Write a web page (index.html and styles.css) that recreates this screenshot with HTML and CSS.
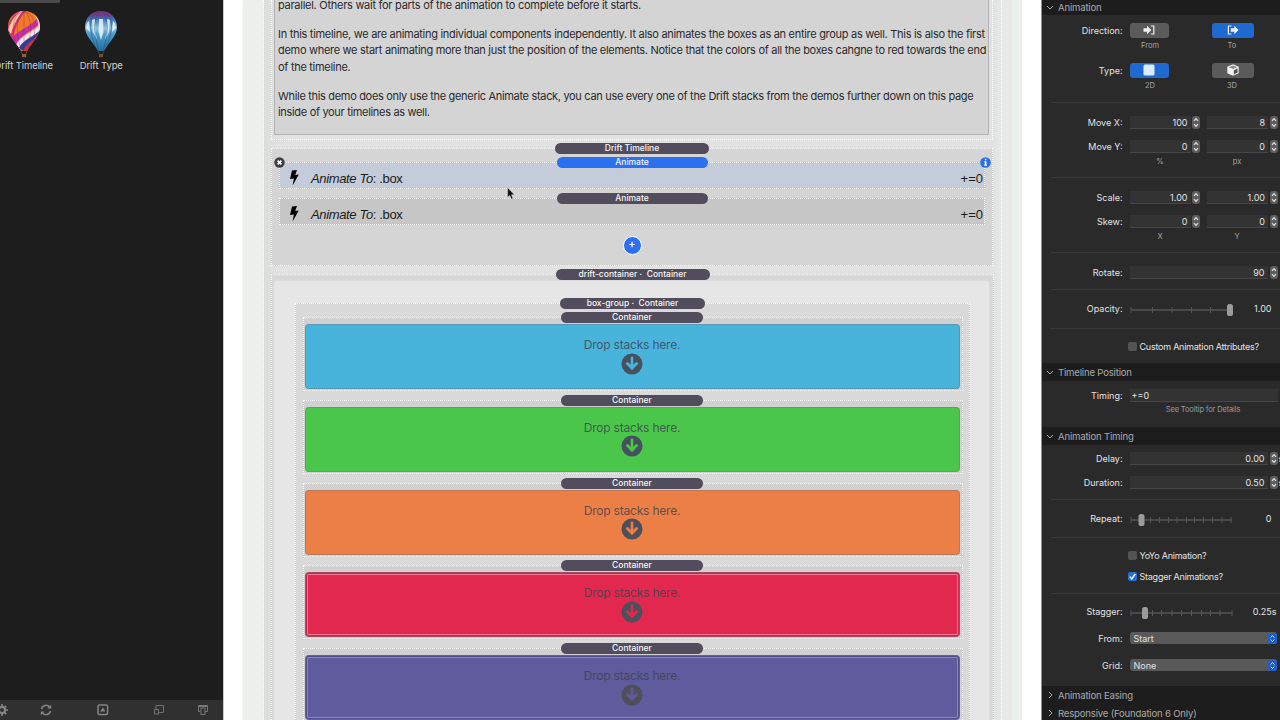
FILE: index.html
```html
<!DOCTYPE html>
<html lang="en">
<head>
  <meta charset="UTF-8" />
  <meta name="viewport" content="width=device-width, initial-scale=1.0"/>
  <title>Drift Timeline</title>
  <link rel="stylesheet" href="styles.css">
</head>
<body>
  <!-- shared icons -->
  <svg class="defs" width="0" height="0">
    <symbol id="bolt" viewBox="0 0 10 16"><path d="M3 .5 8 0 6.2 5 9.8 4.6 3.6 15.6 4.9 8.4 1 9z"/></symbol>
    <symbol id="drop" viewBox="0 0 22 22">
      <path fill-rule="evenodd" d="M11 .5a10.5 10.5 0 1 0 0 21 10.5 10.5 0 0 0 0-21zM9.7 3.7h2.600v8.100l3.200-3.100 1.900 1.800L11 17.300l-6.400-6.800 1.900-1.800 3.200 3.100z"/>
    </symbol>
    <symbol id="step" viewBox="0 0 8 13">
      <rect width="8" height="13" rx="3" fill="#5d5d5d"/>
      <path d="M2 4.8 4 2.7l2 2.100M2 8.200l2 2.100 2-2.100" fill="none" stroke="#e4e4e4" stroke-width="1.200"/>
    </symbol>
    <symbol id="pick" viewBox="0 0 9 11">
      <rect width="9" height="11" rx="2.500" fill="#1d5fc9"/>
      <path d="M2.700 4.500 4.500 2.600l1.800 1.900M2.700 6.600l1.800 1.900 1.800-1.900" fill="none" stroke="#d5e4fa" stroke-width="1"/>
    </symbol>
  </svg>

  <div class="app">
    <aside class="library">
      <div class="tab"></div>
      <div class="stacks">
        <div class="item">
          <svg width="34" height="48" viewBox="0 0 34 48">
            <defs>
              <clipPath id="b1"><path d="M17 1C7 1 1 8 1 17c0 9 8 15 13 24h6c5-9 13-15 13-24C33 8 27 1 17 1z"/></clipPath>
            </defs>
            <g clip-path="url(#b1)">
              <rect width="34" height="48" fill="#ef7a28"/>
              <path d="M-2 22C5 5 9 2 14 0h6C12 8 8 17 5 32z" fill="#d92f72"/>
              <path d="M1 20C5 8 10 4 14 1h2C10 8 7 14 4 24z" fill="#f6cf9e"/>
              <path d="M4 30C9 20 23 19 34 4v9C25 21 13 24 10 36z" fill="#c62fa5"/>
              <path d="M9 35C12 26 27 22 34 13v6C28 27 16 27 13 40z" fill="#f1e6f2"/>
              <path d="M12 38C16 29 28 27 34 19v8L18 42z" fill="#27429d"/>
              <path d="M16 41C19 34 26 30 31 25v6L20 43z" fill="#cf3345"/>
              <path d="M24 1c8 2 12 8 12 14l-5 3c1-7-2-12-7-17z" fill="#f7d8c4"/>
              <path d="M17 1C10 6 8 17 14 41M17 1c7 5 9 17 3 40M17 1v40M17 1C7 4 4 14 8 32M17 1c10 3 13 13 9 31" fill="none" stroke="#8e2360" stroke-opacity=".45" stroke-width=".8"/>
            </g>
            <path d="m14 41 1.400 3.500M20 41l-1.400 3.500" stroke="#6b5a44" stroke-width=".7"/>
            <rect x="15" y="44" width="4.200" height="3.200" fill="#8a6537"/>
          </svg>
          <span>Drift Timeline</span>
        </div>
        <div class="item">
          <svg width="34" height="48" viewBox="0 0 34 48">
            <defs>
              <clipPath id="b2"><path d="M17 1C7 1 1 8 1 17c0 9 8 15 13 24h6c5-9 13-15 13-24C33 8 27 1 17 1z"/></clipPath>
              <linearGradient id="sky" x2="0" y2="1">
                <stop offset="0" stop-color="#a92667"/><stop offset=".13" stop-color="#66438f"/>
                <stop offset=".22" stop-color="#3c79b4"/><stop offset=".42" stop-color="#8fc2dd"/>
                <stop offset=".56" stop-color="#4b9bc8"/><stop offset="1" stop-color="#24699c"/>
              </linearGradient>
            </defs>
            <g clip-path="url(#b2)">
              <rect width="34" height="43" fill="url(#sky)"/>
              <path d="M15 9h4l.5 13-2.500 8-2.500-8zM8 10l3-1 .5 13 1.500 8-4-8zM26 10l-3-1-.5 13-1.500 8 4-8zM3 13l2-2 1 11-4-4zM31 13l-2-2-1 11 4-4z" fill="#e9f5fa" fill-opacity=".85"/>
              <path d="M17 1C10 6 8 17 15 41M17 1c7 5 9 17 2 40M17 1C6 4 2 14 13 41M17 1c11 3 15 13 4 40" fill="none" stroke="#174c7d" stroke-opacity=".6" stroke-width=".8"/>
            </g>
            <path d="m14 41 1.400 3.500M20 41l-1.400 3.500" stroke="#46596a" stroke-width=".7"/>
            <rect x="15" y="44" width="4" height="3.200" fill="#6c5138"/>
          </svg>
          <span>Drift Type</span>
        </div>
      </div>
      <div class="toolbar">
        <svg width="12" height="12" viewBox="0 0 12 12"><circle cx="6" cy="6" r="3.200" fill="none" stroke="#858585" stroke-width="2"/><path d="M6 0v12M0 6h12M1.800 1.800l8.400 8.400M10.200 1.800l-8.400 8.400" stroke="#858585" stroke-width="1.700"/><circle cx="6" cy="6" r="2" fill="#303030"/></svg>
        <svg width="12" height="12" viewBox="0 0 12 12" fill="none" stroke="#858585" stroke-width="1.500"><path d="M1.500 5A4.600 4.600 0 0 1 9.800 3.400M10.500 7A4.600 4.600 0 0 1 2.200 8.600"/><path d="M11.200.8v3.800H7.400zM.8 11.200V7.400h3.800z" fill="#858585" stroke="none"/></svg>
        <svg width="12" height="12" viewBox="0 0 12 12"><rect x="1" y="1" width="9.600" height="9.600" rx="1.500" fill="none" stroke="#858585" stroke-width="1.500"/><path d="m5.800 3.600 2.700 3.800H3.100z" fill="#858585"/></svg>
        <svg width="12" height="12" viewBox="0 0 12 12" fill="none" stroke="#707070"><path d="M3 5V1.500h7.500v7H6"/><rect x="1.500" y="5.500" width="4" height="4.500"/></svg>
        <svg width="12" height="12" viewBox="0 0 12 12" fill="none" stroke="#777"><path d="M3 7.500H1.500v-6h9v6H8M1.500 2.500h9"/><rect x="4" y="4" width="4" height="6.500"/></svg>
      </div>
    </aside>

    <main class="canvas">
      <div class="page"><div class="page-inner"><div class="column">
        <div class="text-stack">
          <div class="text">
            <p>parallel. Others wait for parts of the animation to complete before it starts.</p>
            <p>In this timeline, we are animating individual components independently. It also animates the boxes as an entire group as well. This is also the first<br>
              demo where we start animating more than just the position of the elements. Notice that the colors of all the boxes cahgne to red towards the end<br>
              of the timeline.</p>
            <p>While this demo does only use the generic Animate stack, you can use every one of the Drift stacks from the demos further down on this page<br>
              inside of your timelines as well.</p>
          </div>
        </div>

        <section class="stack timeline">
          <div class="pill wide">Drift Timeline</div>
          <div class="stack animate selected">
            <div class="pill">Animate</div>
            <svg class="close" width="11" height="11" viewBox="0 0 11 11"><circle cx="5.500" cy="5.500" r="5.200" fill="#403f44"/><path d="m3.600 3.600 3.800 3.800M7.400 3.600 3.600 7.400" stroke="#fff" stroke-width="1.700"/></svg>
            <svg class="info" width="11" height="11" viewBox="0 0 11 11"><circle cx="5.500" cy="5.500" r="5.300" fill="#2c6fe4"/><path d="M4.900 1.800h1.400v1.500H4.900zM4.200 4.300h2.200v3.400H7v1H4.100v-1h.7V5.300h-.6z" fill="#fff"/></svg>
            <svg class="bolt" width="10" height="16"><use href="#bolt"/></svg>
            <span class="name"><i>Animate To</i>: .box</span>
            <span class="pos">+=0</span>
          </div>
          <div class="stack animate">
            <div class="pill">Animate</div>
            <svg class="bolt" width="10" height="16"><use href="#bolt"/></svg>
            <span class="name"><i>Animate To</i>: .box</span>
            <span class="pos">+=0</span>
          </div>
          <div class="add">+</div>
        </section>

        <section class="stack drift">
          <div class="pill wide">drift-container ·&nbsp; Container</div>
          <div class="drift-body">
            <div class="stack group">
              <div class="pill mid">box-group ·&nbsp; Container</div>
              <div class="stack box-stack">
                <div class="pill small">Container</div>
                <div class="box blue"><span>Drop stacks here.</span><svg width="22" height="22"><use href="#drop"/></svg></div>
              </div>
              <div class="stack box-stack">
                <div class="pill small">Container</div>
                <div class="box green"><span>Drop stacks here.</span><svg width="22" height="22"><use href="#drop"/></svg></div>
              </div>
              <div class="stack box-stack">
                <div class="pill small">Container</div>
                <div class="box orange"><span>Drop stacks here.</span><svg width="22" height="22"><use href="#drop"/></svg></div>
              </div>
              <div class="stack box-stack">
                <div class="pill small">Container</div>
                <div class="box red"><span>Drop stacks here.</span><svg width="22" height="22"><use href="#drop"/></svg></div>
              </div>
              <div class="stack box-stack">
                <div class="pill small">Container</div>
                <div class="box purple"><span>Drop stacks here.</span><svg width="22" height="22"><use href="#drop"/></svg></div>
              </div>
            </div>
          </div>
        </section>
      </div></div></div>
      <svg class="cursor" width="8" height="13" viewBox="0 0 8 13"><path d="M.6.600v9.800l2.200-2 1.500 3.700 1.700-.7-1.500-3.600h2.900z" fill="#111" stroke="#ddd" stroke-width=".5"/></svg>
    </main>

    <aside class="inspector">
      <h2 class="first"><svg width="8" height="5" viewBox="0 0 8 5"><path d="m1 1 3 3 3-3"/></svg>Animation</h2>
      <div class="set direction">
        <div class="row"><label>Direction:</label>
          <div class="btn"><svg width="12" height="10" viewBox="0 0 12 10"><path d="M.5 3.200H4V.8L8.300 5 4 9.200V6.800H.5z" fill="#f0f0f0"/><path d="M8 1h2.800v8H8" fill="none" stroke="#f0f0f0" stroke-width="1.200"/></svg></div>
          <div class="btn second on"><svg width="12" height="10" viewBox="0 0 12 10"><path d="M3.800 3.200h3.500V.8L11.600 5 7.300 9.200V6.800H3.800z" fill="#f0f0f0"/><path d="M4.500 1H1.400v8h3.100" fill="none" stroke="#f0f0f0" stroke-width="1.200"/></svg></div>
        </div>
        <div class="captions btns"><span>From</span><span>To</span></div>
        <div class="row type"><label>Type:</label>
          <div class="btn on"><svg width="12" height="12" viewBox="0 0 12 12"><rect x=".5" y=".5" width="11" height="11" rx="1.500" fill="#dcebfc"/></svg></div>
          <div class="btn second"><svg width="12" height="12" viewBox="0 0 12 12"><path d="M6 .3 11.700 2.800v6.400L6 11.800.3 9.200V2.800z" fill="#f2f2f2"/><path d="M1.800 3.200 6 5.100l4.200-1.900L6 1.500z" fill="#8b8b8b"/><path d="M6.800 6.200 10.600 4.500v4.100L6.800 10.400z" fill="#555"/></svg></div>
        </div>
        <div class="captions btns"><span>2D</span><span>3D</span></div>
      </div>
      <div class="set move">
        <div class="row"><label>Move X:</label><div class="field">100</div><svg class="step"><use href="#step"/></svg><div class="field">8</div><svg class="step"><use href="#step"/></svg></div>
        <div class="row"><label>Move Y:</label><div class="field">0</div><svg class="step"><use href="#step"/></svg><div class="field">0</div><svg class="step"><use href="#step"/></svg></div>
        <div class="captions units"><span>%</span><span>px</span></div>
      </div>
      <div class="set move">
        <div class="row"><label>Scale:</label><div class="field">1.00</div><svg class="step"><use href="#step"/></svg><div class="field">1.00</div><svg class="step"><use href="#step"/></svg></div>
        <div class="row"><label>Skew:</label><div class="field">0</div><svg class="step"><use href="#step"/></svg><div class="field">0</div><svg class="step"><use href="#step"/></svg></div>
        <div class="captions units"><span>X</span><span>Y</span></div>
      </div>
      <div class="set rotate">
        <div class="row"><label>Rotate:</label><div class="field long">90</div><svg class="step"><use href="#step"/></svg></div>
      </div>
      <div class="set opacity">
        <div class="row"><label>Opacity:</label>
          <svg class="slider" width="104" height="14" viewBox="0 0 104 14"><path d="M1 7h98" stroke="#494949" stroke-width="1.800"/><path d="M1 4v6M22.500 4v6M42 4v6M61.500 4v6M80.500 4v6" stroke="#555"/><rect x="97" y="1" width="6" height="12" rx="2.600" fill="#9b9b9b"/></svg>
          <output>1.00</output></div>
      </div>
      <div class="set custom">
        <div class="check"><b></b>Custom Animation Attributes?</div>
      </div>
      <h2><svg width="8" height="5" viewBox="0 0 8 5"><path d="m1 1 3 3 3-3"/></svg>Timeline Position</h2>
      <div class="set position">
        <div class="row"><label>Timing:</label><div class="field text-field">+=0</div></div>
        <div class="hint">See Tooltip for Details</div>
      </div>
      <h2><svg width="8" height="5" viewBox="0 0 8 5"><path d="m1 1 3 3 3-3"/></svg>Animation Timing</h2>
      <div class="set timing">
        <div class="row"><label>Delay:</label><div class="field long">0.00</div><svg class="step"><use href="#step"/></svg><em>s</em></div>
        <div class="row"><label>Duration:</label><div class="field long">0.50</div><svg class="step"><use href="#step"/></svg><em>s</em></div>
      </div>
      <div class="set repeat">
        <div class="row"><label>Repeat:</label>
          <svg class="slider" width="104" height="14" viewBox="0 0 104 14"><path d="M1 7h101" stroke="#494949" stroke-width="1.800"/><path d="M1 4v6M20.500 4v6M29.500 4v6M38.500 4v6M47 4v6M56.500 4v6M64.500 4v6M73.500 4v6M82.500 4v6M92 4v6M101 4v6" stroke="#555"/><rect x="8.500" y="1" width="6" height="12" rx="2.600" fill="#9b9b9b"/></svg>
          <output>0</output></div>
      </div>
      <div class="set checks">
        <div class="check"><b></b>YoYo Animation?</div>
        <div class="check"><b class="on"><svg width="9" height="9" viewBox="0 0 9 9"><path d="m1.800 4.600 2 2.300L7.200 2" fill="none" stroke="#fff" stroke-width="1.400"/></svg></b>Stagger Animations?</div>
      </div>
      <div class="set stagger">
        <div class="row"><label>Stagger:</label>
          <svg class="slider" width="104" height="14" viewBox="0 0 104 14"><path d="M1 7h101" stroke="#494949" stroke-width="1.800"/><path d="M1 4v6M22.500 4v6M31.500 4v6M42 4v6M51.500 4v6M61.500 4v6M71.500 4v6M80.500 4v6M90 4v6M102 4v6" stroke="#555"/><rect x="12" y="1" width="6" height="12" rx="2.600" fill="#9b9b9b"/></svg>
          <output class="unit">0.25s</output></div>
        <div class="row select-row"><label>From:</label><div class="select">Start<svg width="9" height="11"><use href="#pick"/></svg></div></div>
        <div class="row select-row"><label>Grid:</label><div class="select">None<svg width="9" height="11"><use href="#pick"/></svg></div></div>
      </div>
      <h2 class="shut"><svg width="5" height="8" viewBox="0 0 5 8"><path d="m1 1 3 3-3 3"/></svg>Animation Easing</h2>
      <h2 class="shut"><svg width="5" height="8" viewBox="0 0 5 8"><path d="m1 1 3 3-3 3"/></svg>Responsive (Foundation 6 Only)</h2>
    </aside>
  </div>
</body>
</html>
```
FILE: styles.css
```css
* {
  box-sizing: border-box;
}
body {
  margin: 0;
  font-family: Inter, "Liberation Sans", sans-serif;
  background: #fff;
  overflow: hidden;
}
svg {
  display: block;
  flex: none;
}
.defs {
  position: absolute;
}
.app {
  display: flex;
  width: 1280px;
  height: 720px;
  overflow: hidden;
}

/* library on the left */
.library {
  width: 223px;
  flex: none;
  display: flex;
  flex-direction: column;
  background: #1d1d1d;
  overflow: hidden;
}
.tab {
  width: 60px;
  height: 3px;
  background: #4b4b4b;
  border-radius: 0 0 2px 0;
}
.stacks {
  flex: 1;
  display: flex;
  margin-left: -15px;
  padding-top: 7px;
}
.item {
  width: 77.5px;
  display: flex;
  flex-direction: column;
  align-items: center;
  color: #d3d3d3;
  font-size: 9.5px;
  letter-spacing: -.1px;
  line-height: 15px;
  white-space: nowrap;
}
.toolbar {
  height: 20px;
  background: #303030;
  display: flex;
  align-items: center;
  margin: 0;
}
.toolbar svg:nth-child(1) { margin-left: -4px; }
.toolbar svg:nth-child(2) { margin-left: 32px; }
.toolbar svg:nth-child(3) { margin-left: 45px; }
.toolbar svg:nth-child(4) { margin-left: 44px; }
.toolbar svg:nth-child(5) { margin-left: 32px; }

/* edit area */
.canvas {
  width: 819px;
  flex: none;
  position: relative;
  background: #fff;
  border-left: 1px solid #c9c9c9;
  border-right: 1px solid #8e8e8e;
  padding: 0 19px 0 18px;
}
.page {
  height: 720px;
  background: #ecf0ec;
  border-left: 1px dotted #fff;
  padding: 0 10px 0 20px;
}
.page-inner {
  height: 720px;
  background: linear-gradient(90deg, #dadeda 0, #dfe0df 9px, #e2e2e3 20px, #e2e2e3 730px, #e8eae8 740px);
  border-left: 1px dotted #fff;
  padding: 0 10px 0 7px;
}
.column {
  height: 720px;
  width: 731px;
  border-right: 1px dotted #fff;
  overflow: hidden;
}
.text-stack {
  height: 140px;
  width: 722px;
  border: 1px dotted #fff;
  border-top: 0;
  padding: 0 3px 4px 2px;
}
.text {
  height: 135px;
  overflow: hidden;
  background: #d4d4d4;
  border: 1px solid #b2b2b4;
  border-top: 0;
  padding-left: 3px;
  color: #2a2a2c;
  font-size: 11px;
  letter-spacing: -.27px;
  line-height: 16.6px;
  white-space: nowrap;
}
.text p {
  margin: 0 0 12.5px;
}
.text p:first-child {
  margin-top: -3.5px;
}
.text p:nth-child(2) {
  letter-spacing: -.295px;
}
.text p:nth-child(3) {
  letter-spacing: -.32px;
}
.stack {
  position: relative;
  border: 1px dotted #fff;
}
.pill {
  position: absolute;
  top: -6px;
  left: 50%;
  width: 151px;
  height: 11px;
  margin-left: -75.5px;
  border-radius: 6px;
  background: #514d5c;
  color: #f6f6f6;
  font-size: 8.5px;
  font-weight: 500;
  line-height: 11px;
  text-align: center;
  white-space: nowrap;
}
.pill.wide { width: 154px; margin-left: -77px; }
.pill.mid { width: 145px; margin-left: -72.5px; }
.pill.small { width: 142px; margin-left: -72px; }
.timeline {
  width: 722px;
  height: 118px;
  margin-top: 8px;
  background: #d5d5d5;
  padding: 13px 7px 0;
}
.animate {
  height: 27px;
  width: 706px;
  margin-bottom: 9px;
  background: #c6c6c6;
  display: flex;
  align-items: center;
  padding: 5px 1px 0 9px;
  color: #1b1b1c;
  font: 13px "Liberation Sans", sans-serif;
}
.animate.selected {
  background: #c5ccd9;
}
.selected .pill {
  background: #2b70ee;
}
.animate .pill {
  font: 500 8.5px/11px Inter, sans-serif;
}
.animate .name {
  flex: 1;
  margin-left: 12px;
  letter-spacing: -.35px;
}
.close {
  position: absolute;
  top: -6px;
  left: -6px;
}
.info {
  position: absolute;
  top: -6px;
  right: -7px;
}
.add {
  width: 19px;
  height: 19px;
  margin: 11px auto 0;
  border: 1.5px solid #fff;
  border-radius: 50%;
  background: #2b70ee;
  color: #fff;
  font-size: 11px;
  font-weight: 500;
  line-height: 15px;
  text-align: center;
}
.drift {
  width: 723px;
  height: 460px;
  margin-top: 8px;
  background: #d8d8d8;
  padding: 5px 3px 0 1px;
}
.drift-body {
  height: 460px;
  background: #e6e6e6;
  border: 1px solid #dcdcdc;
  border-radius: 4px;
  padding: 22px 21px 0;
}
.group {
  width: 675px;
  height: 440px;
  background: #d9d9d9;
  padding: 13px 6px 0 7px;
}
.box-stack {
  height: 74px;
  margin-bottom: 8.8px;
  padding: 6px 2px 0 1px;
  background: #d0d1d0;
}
.box {
  height: 65px;
  border-radius: 4px;
  border: 1px solid rgba(110, 110, 120, .4);
  display: flex;
  flex-direction: column;
  align-items: center;
  padding: 12px 1px 0 0;
  color: rgba(62, 66, 78, .82);
  font-size: 12px;
  letter-spacing: -.2px;
  line-height: 16px;
}
.box svg {
  margin-top: -.5px;
  fill: #46505f;
}
.blue { background: #48b4dc; }
.green { background: #4ac74a; }
.orange { background: #ec7f46; }
.red {
  background: #e2284e;
  box-shadow: inset 0 0 0 1px #c3284c, inset 0 0 0 2px #f07a94;
}
.purple {
  background: #5f5b9c;
  box-shadow: inset 0 0 0 1px #514d8c, inset 0 0 0 2px #8c88be;
}
.orange svg,
.red svg,
.purple svg {
  fill: #4d4f5a;
}
.cursor {
  position: absolute;
  left: 283px;
  top: 187px;
}

/* inspector on the right */
.inspector {
  width: 238px;
  flex: none;
  background: #2a2a2a;
  color: #e2e2e2;
  font-size: 9px;
  overflow: hidden;
}
h2 {
  margin: 0;
  height: 18px;
  padding-left: 4px;
  display: flex;
  align-items: center;
  background: #1d1d1d;
  color: #a9a9a9;
  font-size: 9.6px;
  font-weight: 400;
  letter-spacing: -.2px;
  white-space: nowrap;
}
h2 svg {
  margin-right: 4px;
  fill: none;
  stroke: #a9a9a9;
}
h2.first {
  height: 15px;
  padding-bottom: 1px;
}
h2.shut {
  padding-left: 6px;
}
h2.shut svg {
  margin-right: 5px;
}
.set {
  position: relative;
}
.set + .set {
  background: linear-gradient(#393939, #393939) 9px 0 / 229px 1px no-repeat;
}
.row {
  height: 24px;
  display: flex;
  align-items: center;
  white-space: nowrap;
}
.row label {
  width: 80.5px;
  margin-right: 7px;
  flex: none;
  text-align: right;
}
.btn {
  width: 39px;
  height: 15px;
  border-radius: 3px;
  background: #5b5b5b;
  display: flex;
  align-items: center;
  justify-content: center;
}
.btn.second {
  width: 42px;
  margin-left: 43px;
}
.btn.on {
  background: #1f6ad0;
}
.captions {
  display: flex;
  height: 8px;
  padding-left: 88px;
  color: #a5a5a5;
  font-size: 7.5px;
  line-height: 8px;
  text-align: center;
}
.btns span { width: 40px; }
.btns span + span { margin-left: 42px; }
.units span { width: 60px; }
.units span + span { margin-left: 17px; }
.units { line-height: 7px; }
.field {
  width: 61px;
  height: 13px;
  flex: none;
  padding-right: 3px;
  background: #333;
  border-bottom: 1px solid #464646;
  line-height: 13px;
  text-align: right;
}
.field.long { width: 138px; }
.field.text-field {
  width: 148px;
  text-align: left;
  padding-left: 2px;
}
.step {
  width: 8px;
  height: 13px;
  margin: 0 7px 0 1.5px;
}
.long + .step,
.step ~ .step {
  margin-left: 2px;
  margin-right: 1px;
}
em {
  font-style: normal;
}
.slider {
  margin-top: 4px;
}
output {
  width: 38px;
  text-align: right;
}
output.unit { width: 43px; }
.check {
  height: 21px;
  padding-left: 85.5px;
  display: flex;
  align-items: center;
  letter-spacing: -.24px;
}
.check b {
  width: 9px;
  height: 9px;
  margin-right: 3px;
  border-radius: 2px;
  background: #535353;
}
.check b.on { background: #2370d6; }
.direction { height: 87px; padding-top: 3px; }
.row.type { margin-top: 8px; }
.set.move { height: 75px; padding-top: 8px; }
.set.rotate { height: 37px; padding-top: 8px; }
.set.opacity { height: 39px; padding-top: 7px; }
.set.custom { height: 35px; padding-top: 8px; }
.position { height: 46px; padding-top: 2px; }
.hint {
  padding-left: 84px;
  width: 238px;
  color: #9d9d9d;
  font-size: 7.5px;
  letter-spacing: -.15px;
  line-height: 5px;
  text-align: center;
}
.timing { height: 54px; padding-top: 1px; }
.set.repeat { height: 38px; padding-top: 7px; }
.set.checks { height: 56px; padding-top: 8px; }
.set.stagger { height: 93px; padding-top: 6px; }
.select {
  width: 147px;
  height: 12px;
  padding-left: 4px;
  border-radius: 3px;
  background: #595959;
  display: flex;
  align-items: center;
  justify-content: space-between;
}
.select-row {
  margin-top: 3px;
}
```
